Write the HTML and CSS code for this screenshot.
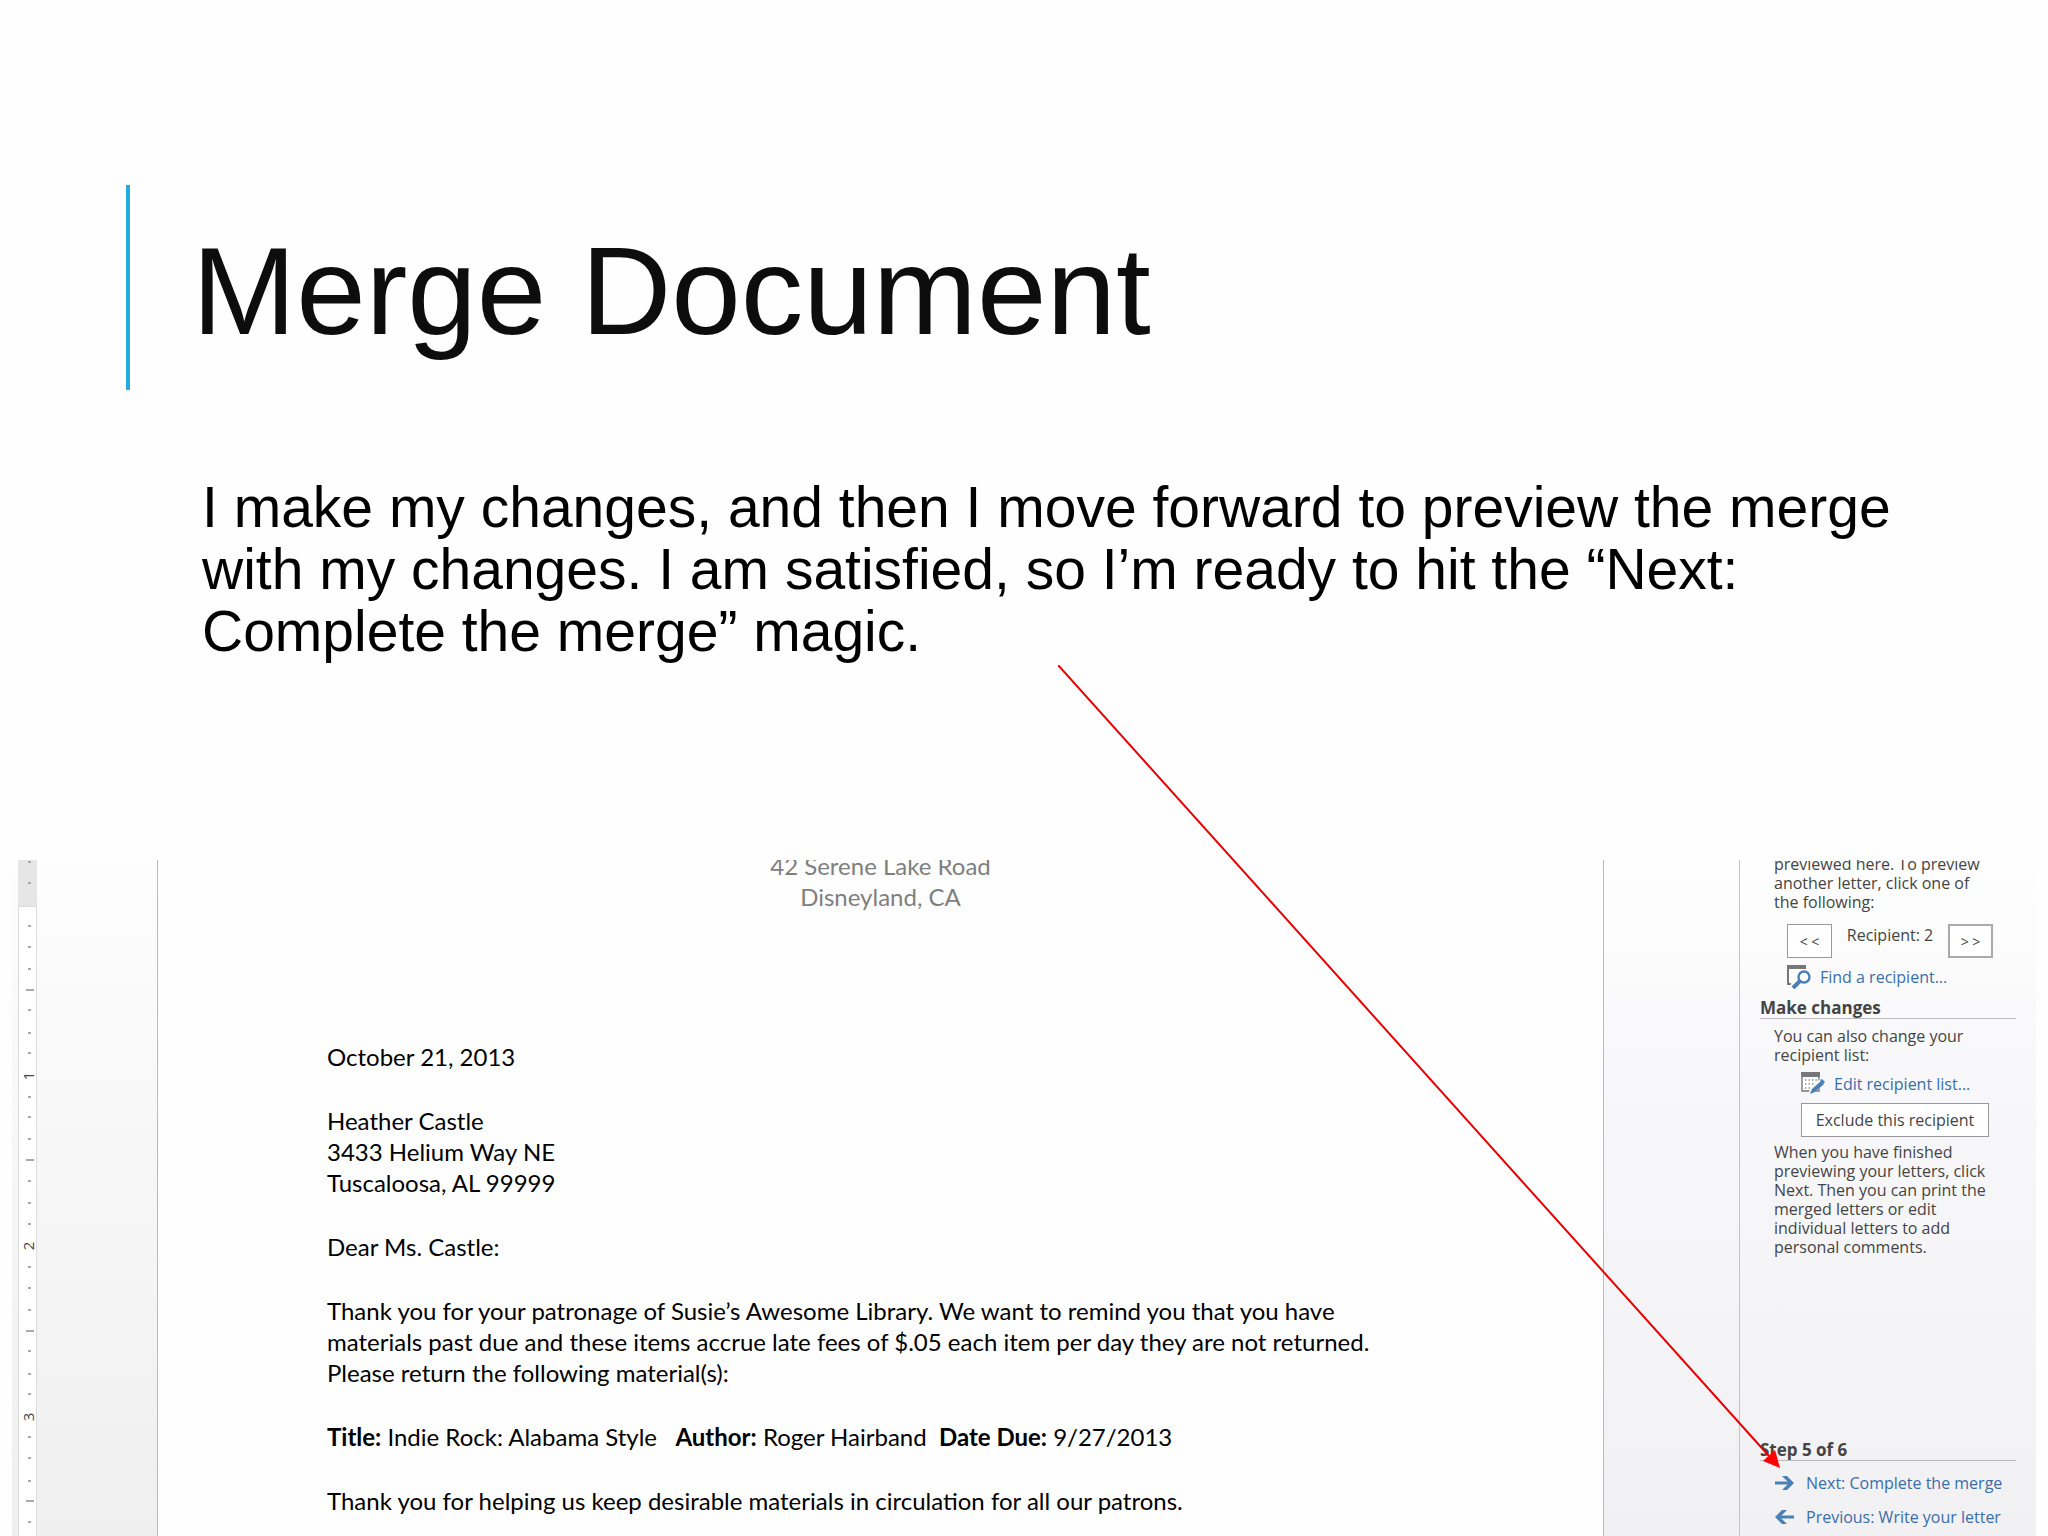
FILE: index.html
```
<!DOCTYPE html>
<html lang="en">
<head>
<meta charset="UTF-8" />
<title>Merge Document</title>
<link rel="stylesheet" href="styles.css">
</head>
<body>
<main class="slide">
  <!-- Title -->
  <header class="slide-title">
    <h1>Merge Document</h1>
  </header>

  <p class="slide-text">I make my changes, and then I move forward to preview the merge with my changes. I am satisfied, so I’m ready to hit the “Next: Complete the merge” magic.</p>

  <!-- Word window -->
  <section class="word">
    <div class="edge"></div>
    <svg class="ruler" width="19" height="676" viewBox="0 0 19 676">
      <rect class="ruler-page" x="1" y="47" width="17" height="629" />
      <path class="ruler-edge" d="M.5 47V676M18.5 47V676M0 46.5H19" />
      <path class="tick" d="M10 2h3M10 23h3M10 66h3M10 87h3M10 109h3M8 130h8M10 150h3M10 173h3M10 193h3M10 237h3M10 257h3M10 279h3M8 300h8M10 321h3M10 343h3M10 364h3M10 407h3M10 428h3M10 450h3M8 471h8M10 491h3M10 514h3M10 534h3M10 577h3M10 598h3M10 621h3M8 641h8M10 662h3" />
      <text transform="translate(16 216) rotate(-90)">1</text>
      <text transform="translate(16 386) rotate(-90)">2</text>
      <text transform="translate(16 557) rotate(-90)">3</text>
    </svg>
    <div class="gutter"></div>

    <article class="letter">
      <p class="letterhead">42 Serene Lake Road<br>Disneyland, CA</p>
      <p>October 21, 2013</p>
      <p>Heather Castle<br>3433 Helium Way NE<br>Tuscaloosa, AL 99999</p>
      <p>Dear Ms. Castle:</p>
      <p>Thank you for your patronage of Susie’s Awesome Library. We want to remind you that you have<br>materials past due and these items accrue late fees of $.05 each item per day they are not returned.<br>Please return the following material(s):</p>
      <p class="item"><b>Title:</b> Indie Rock: Alabama Style   <b>Author:</b> Roger Hairband  <b>Date Due:</b> 9/27/2013</p>
      <p>Thank you for helping us keep desirable materials in circulation for all our patrons.</p>
    </article>

    <div class="gutter gutter-right"></div>

    <!-- Mail merge pane -->
    <aside class="pane">
      <p class="pane-text pane-first">previewed here. To preview<br>another letter, click one of<br>the following:</p>
      <div class="recipient">
        <button class="btn step-btn" type="button">&lt; &lt;</button>
        <span class="recipient-name">Recipient: 2</span>
        <button class="btn step-btn focused" type="button">&gt; &gt;</button>
      </div>
      <a class="action find" href="#">
        <svg width="24" height="24" viewBox="0 0 24 24">
          <path d="M0 0h19v4H2v14h2v2H0z" fill="#777" />
          <path d="M2 4h16v3l-8 11H2z" fill="#fff" />
          <circle cx="17" cy="12" r="5.5" fill="#fff" stroke="#4b80b4" stroke-width="2.4" />
          <path d="M13 16l-7 7" stroke="#4b80b4" stroke-width="4" />
        </svg>
        Find a recipient...
      </a>
      <h2>Make changes</h2>
      <p class="pane-text">You can also change your<br>recipient list:</p>
      <a class="action edit" href="#">
        <svg width="24" height="24" viewBox="0 0 24 24">
          <path d="M1 1h17v18H1z" fill="#fff" stroke="#777" stroke-width="1.4" />
          <path d="M0 0h19v5H0z" fill="#777" />
          <path d="M4 8h12M4 12h12M4 16h9" stroke="#888" stroke-width="1.3" stroke-dasharray="1.3 2.2" />
          <path d="M7 23l2-6L20 6l5 4-12 11z" fill="#f8f8fa" />
          <path d="M9 22l2-5 9-8 3 3-9 8zM19 8l2-1 3 3-2 2z" fill="#4b80b4" />
        </svg>
        Edit recipient list...
      </a>
      <button class="btn exclude" type="button">Exclude this recipient</button>
      <p class="pane-text">When you have finished<br>previewing your letters, click<br>Next. Then you can print the<br>merged letters or edit<br>individual letters to add<br>personal comments.</p>

      <nav class="wizard">
        <h2>Step 5 of 6</h2>
        <a class="action" href="#">
          <svg width="19" height="16" viewBox="0 0 19 16"><path d="M0 8h16" stroke="#4b80b4" stroke-width="3" /><path d="M7 1h5l7 7-7 7H7l7-7z" fill="#4b80b4" /></svg>
          Next: Complete the merge
        </a>
        <a class="action" href="#">
          <svg width="19" height="16" viewBox="0 0 19 16"><path d="M3 8h16" stroke="#4b80b4" stroke-width="3" /><path d="M12 1H7L0 8l7 7h5L5 8z" fill="#4b80b4" /></svg>
          Previous: Write your letter
        </a>
      </nav>
    </aside>
  </section>

  <!-- Arrow pointing at the next step -->
  <svg class="arrow" viewBox="0 0 722 803">
    <path d="M0 0L711 791" stroke="#e60000" stroke-width="2" />
    <path d="M722 803L705 796 717 785z" fill="#f00" />
  </svg>
</main>
</body>
</html>
```
FILE: styles.css
```
* {
  box-sizing: border-box;
}
body {
  margin: 0;
  background: #fefefe;
  font-family: "Liberation Sans", sans-serif;
  color: #000;
}
h1, h2, p {
  margin: 0;
  font-weight: normal;
}
.slide {
  position: relative;
  display: flex;
  flex-direction: column;
  height: 100vh;
  overflow: hidden;
}
/* Title and text */
.slide-title {
  margin: 185px 126px 0;
  padding: 34px 0 27px 62px;
  border-left: 4px solid #27aae1;
}
.slide-title h1 {
  font-size: 125px;
  line-height: 144px;
  color: #0d0d0d;
}
.slide-text {
  padding: 86px 140px 0 202px;
  margin-bottom: 198px;
  font-size: 57px;
  line-height: 62px;
}
/* Word window */
.word {
  flex: 1;
  display: grid;
  grid-template-columns: 6px 19px 121px 1fr 137px 296px;
  grid-template-rows: 100%;
  min-height: 0;
  margin: 0 12px;
  overflow: hidden;
}
.edge, .gutter {
  background: linear-gradient(#fdfdfd, #f6f6f6 50%, #efefef);
}
.ruler {
  background: #e6e6e6;
}
.ruler-page {
  fill: #fff;
}
.ruler-edge {
  fill: none;
  stroke: #dcdcdc;
}
.tick {
  stroke: #aaa;
  stroke-width: 2;
}
.ruler text {
  font-family: "Open Sans", sans-serif;
  font-size: 15px;
  text-anchor: middle;
  fill: #444;
}
.gutter {
  border-right: 1px solid #bbb;
}
.gutter-right {
  background: linear-gradient(#fefefe, #f8f8fa 30%, #f1f0f3);
  border-left: 1px solid #bbb;
  border-right: 1px solid #c4c4c8;
}
.letter {
  padding: 0 169px;
  font-family: Lato, sans-serif;
  font-size: 24px;
  line-height: 31px;
}
.letter p {
  margin-bottom: 33px;
  white-space: nowrap;
}
.letter .item {
  white-space: pre;
}
.letter .letterhead {
  margin: -10px 0 129px;
  text-align: center;
  color: #7f7f7f;
}
/* Mail merge pane */
.pane {
  display: flex;
  flex-direction: column;
  align-items: flex-start;
  padding: 0 20px 2px;
  background: linear-gradient(#fefefe, #f8f8fa 30%, #f1f0f3);
  font-family: "Open Sans", sans-serif;
  font-size: 16px;
  line-height: 19px;
  color: #444;
}
.pane h2 {
  width: 100%;
  height: 25px;
  border-bottom: 1px solid #bbb;
  font-size: 17px;
  line-height: 27px;
  font-weight: bold;
}
.pane-text {
  margin: 8px 0 7px 14px;
  white-space: nowrap;
}
.pane .pane-first {
  margin-top: -5px;
}
.recipient {
  display: flex;
  justify-content: space-between;
  width: 206px;
  margin: 5px 0 7px 27px;
}
.recipient-name {
  line-height: 22px;
}
.btn {
  height: 34px;
  padding: 0;
  background: #fff;
  border: 1px solid #999;
  font: inherit;
  color: #444;
}
.step-btn {
  width: 45px;
  font-size: 14px;
}
.focused {
  border: 2px solid #aaa;
}
.action {
  display: flex;
  align-items: center;
  gap: 9px;
  color: #3a6ea8;
  text-decoration: none;
  white-space: nowrap;
}
.find {
  margin: 0 0 5px 27px;
}
.edit {
  margin: 0 0 7px 41px;
}
.exclude {
  width: 188px;
  margin: 0 0 -2px 41px;
}
.wizard {
  width: 100%;
  margin-top: auto;
}
.wizard .action {
  gap: 12px;
  height: 34px;
  margin-left: 15px;
}
.wizard h2 {
  margin-bottom: 5px;
}
/* Arrow over the window */
.arrow {
  position: absolute;
  right: 268px;
  bottom: 68px;
  width: 722px;
  height: 803px;
  pointer-events: none;
}
```
